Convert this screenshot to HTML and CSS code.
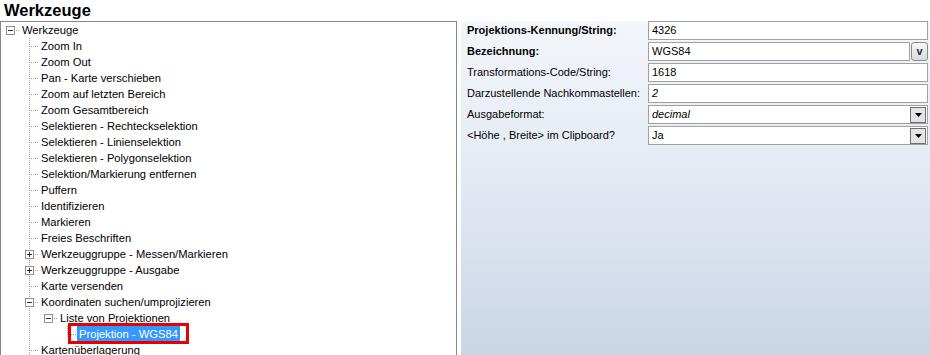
FILE: index.html
```html
<html>
<head>
<meta charset="utf-8">
<link rel="stylesheet" href="styles.css">
</head>
<body>
<div class="title">Werkzeuge</div>
<div class="main">
  <div class="tree">
    <div class="row"><span class="c h"><svg class="pm" width="9" height="9"><rect x="0.5" y="0.5" width="8" height="8" fill="#fff" stroke="#919191"/><path d="M2 4.5h5" stroke="#1c2b5a"/></svg></span><span class="txt">Werkzeuge</span></div>
    <div class="row"><span class="c"></span><span class="c t"></span><span class="txt">Zoom In</span></div>
    <div class="row"><span class="c"></span><span class="c t"></span><span class="txt">Zoom Out</span></div>
    <div class="row"><span class="c"></span><span class="c t"></span><span class="txt">Pan - Karte verschieben</span></div>
    <div class="row"><span class="c"></span><span class="c t"></span><span class="txt">Zoom auf letzten Bereich</span></div>
    <div class="row"><span class="c"></span><span class="c t"></span><span class="txt">Zoom Gesamtbereich</span></div>
    <div class="row"><span class="c"></span><span class="c t"></span><span class="txt">Selektieren - Rechteckselektion</span></div>
    <div class="row"><span class="c"></span><span class="c t"></span><span class="txt">Selektieren - Linienselektion</span></div>
    <div class="row"><span class="c"></span><span class="c t"></span><span class="txt">Selektieren - Polygonselektion</span></div>
    <div class="row"><span class="c"></span><span class="c t"></span><span class="txt">Selektion/Markierung entfernen</span></div>
    <div class="row"><span class="c"></span><span class="c t"></span><span class="txt">Puffern</span></div>
    <div class="row"><span class="c"></span><span class="c t"></span><span class="txt">Identifizieren</span></div>
    <div class="row"><span class="c"></span><span class="c t"></span><span class="txt">Markieren</span></div>
    <div class="row"><span class="c"></span><span class="c t"></span><span class="txt">Freies Beschriften</span></div>
    <div class="row"><span class="c"></span><span class="c t"><svg class="pm" width="9" height="9"><rect x="0.5" y="0.5" width="8" height="8" fill="#fff" stroke="#919191"/><path d="M2 4.5h5M4.5 2v5" stroke="#1c2b5a"/></svg></span><span class="txt">Werkzeuggruppe - Messen/Markieren</span></div>
    <div class="row"><span class="c"></span><span class="c t"><svg class="pm" width="9" height="9"><rect x="0.5" y="0.5" width="8" height="8" fill="#fff" stroke="#919191"/><path d="M2 4.5h5M4.5 2v5" stroke="#1c2b5a"/></svg></span><span class="txt">Werkzeuggruppe - Ausgabe</span></div>
    <div class="row"><span class="c"></span><span class="c t"></span><span class="txt">Karte versenden</span></div>
    <div class="row"><span class="c"></span><span class="c t"><svg class="pm" width="9" height="9"><rect x="0.5" y="0.5" width="8" height="8" fill="#fff" stroke="#919191"/><path d="M2 4.5h5" stroke="#1c2b5a"/></svg></span><span class="txt">Koordinaten suchen/umprojizieren</span></div>
    <div class="row"><span class="c"></span><span class="c v"></span><span class="c h"><svg class="pm" width="9" height="9"><rect x="0.5" y="0.5" width="8" height="8" fill="#fff" stroke="#919191"/><path d="M2 4.5h5" stroke="#1c2b5a"/></svg></span><span class="txt">Liste von Projektionen</span></div>
    <div class="row"><span class="c"></span><span class="c v"></span><span class="c"></span><span class="c l"></span><span class="txt sel">Projektion - WGS84</span></div>
    <div class="row"><span class="c"></span><span class="c t"></span><span class="txt">Kartenüberlagerung</span></div>
  </div>

  <div class="props">
    <div class="lbl b">Projektions-Kennung/String:</div>
    <div class="val"><div class="box">4326</div></div>

    <div class="lbl b">Bezeichnung:</div>
    <div class="val"><div class="box">WGS84</div><div class="vbtn">v</div></div>

    <div class="lbl">Transformations-Code/String:</div>
    <div class="val"><div class="box">1618</div></div>

    <div class="lbl">Darzustellende Nachkommastellen:</div>
    <div class="val"><div class="box i">2</div></div>

    <div class="lbl">Ausgabeformat:</div>
    <div class="val"><div class="box drop"><span class="i">decimal</span><span class="dbtn"><svg width="7" height="4"><path d="M0 0h7L3.5 4z" fill="#000"/></svg></span></div></div>

    <div class="lbl">&lt;Höhe , Breite&gt; im Clipboard?</div>
    <div class="val"><div class="box drop"><span>Ja</span><span class="dbtn"><svg width="7" height="4"><path d="M0 0h7L3.5 4z" fill="#000"/></svg></span></div></div>
  </div>
</div>
</body>
</html>
```

FILE: styles.css
```css
body {
  margin: 0;
  background: #fff;
  font-family: "Liberation Sans", Arial, sans-serif;
  color: #000;
  overflow: hidden;
}

.title {
  height: 21px;
  line-height: 20px;
  padding-left: 4px;
  font-size: 16.5px;
  font-weight: bold;
}

.main {
  display: flex;
  height: 334px;
  overflow: hidden;
}

/* tree view */
.tree {
  width: 455px;
  border: 1px solid #828790;
  border-bottom: 0;
  font-size: 11.2px;
}

.row {
  display: flex;
  height: 16px;
  align-items: center;
}

.c {
  width: 19px;
  height: 16px;
  flex-shrink: 0;
  display: flex;
  align-items: center;
  background-repeat: no-repeat;
}

.c .pm {
  margin-left: 5px;
  display: block;
}

.v {
  background-image: repeating-linear-gradient(to bottom, #a0a0a0 0 1px, transparent 1px 2px);
  background-size: 1px 16px;
  background-position: 9px 0;
}

.h {
  background-image: repeating-linear-gradient(to right, #a0a0a0 0 1px, transparent 1px 2px);
  background-size: 10px 1px;
  background-position: 9px 8px;
}

.t {
  background-image:
    repeating-linear-gradient(to bottom, #a0a0a0 0 1px, transparent 1px 2px),
    repeating-linear-gradient(to right, #a0a0a0 0 1px, transparent 1px 2px);
  background-size: 1px 16px, 10px 1px;
  background-position: 9px 0, 9px 8px;
}

.l {
  background-image:
    repeating-linear-gradient(to bottom, #a0a0a0 0 1px, transparent 1px 2px),
    repeating-linear-gradient(to right, #a0a0a0 0 1px, transparent 1px 2px);
  background-size: 1px 8px, 10px 1px;
  background-position: 9px 0, 9px 8px;
}

.txt {
  padding: 0 2px;
  line-height: 16px;
  white-space: nowrap;
}

.sel {
  position: relative;
  background: #3399ff;
  color: #fff;
}

.sel::after {
  content: '';
  position: absolute;
  left: -9px;
  right: -9px;
  top: -3px;
  bottom: -2px;
  border: 3px solid #e60000;
}

/* property grid */
.props {
  flex: 1;
  margin-left: 4px;
  padding-right: 2px;
  display: grid;
  grid-template-columns: 187px 1fr;
  grid-auto-rows: 21px;
  align-content: start;
  font-size: 11px;
  background: linear-gradient(to bottom, #f3f6fa 0%, #e6ecf5 40%, #c9d5e6 100%);
}

.lbl {
  padding-left: 6px;
  line-height: 19px;
  white-space: nowrap;
}

.b {
  font-weight: bold;
}

.i {
  font-style: italic;
}

.val {
  display: flex;
  gap: 1px;
}

.box {
  flex: 1;
  height: 19px;
  box-sizing: border-box;
  border: 1px solid #a0a0a0;
  background: #fff;
  padding-left: 3px;
  line-height: 17px;
}

.drop {
  display: flex;
  justify-content: space-between;
  align-items: center;
}

.dbtn {
  width: 14px;
  height: 14px;
  margin-right: 1px;
  border: 1px solid #6f6f6f;
  background: #e4e4e4;
  display: flex;
  align-items: center;
  justify-content: center;
}

.dbtn svg {
  display: block;
}

.vbtn {
  width: 17px;
  height: 19px;
  box-sizing: border-box;
  border: 1px solid #8a8a8a;
  border-radius: 3px;
  background: linear-gradient(to bottom, #f6f6f6, #dadada);
  text-align: center;
  font-weight: bold;
  font-size: 11px;
  line-height: 16px;
  color: #1a2a5e;
}
```
